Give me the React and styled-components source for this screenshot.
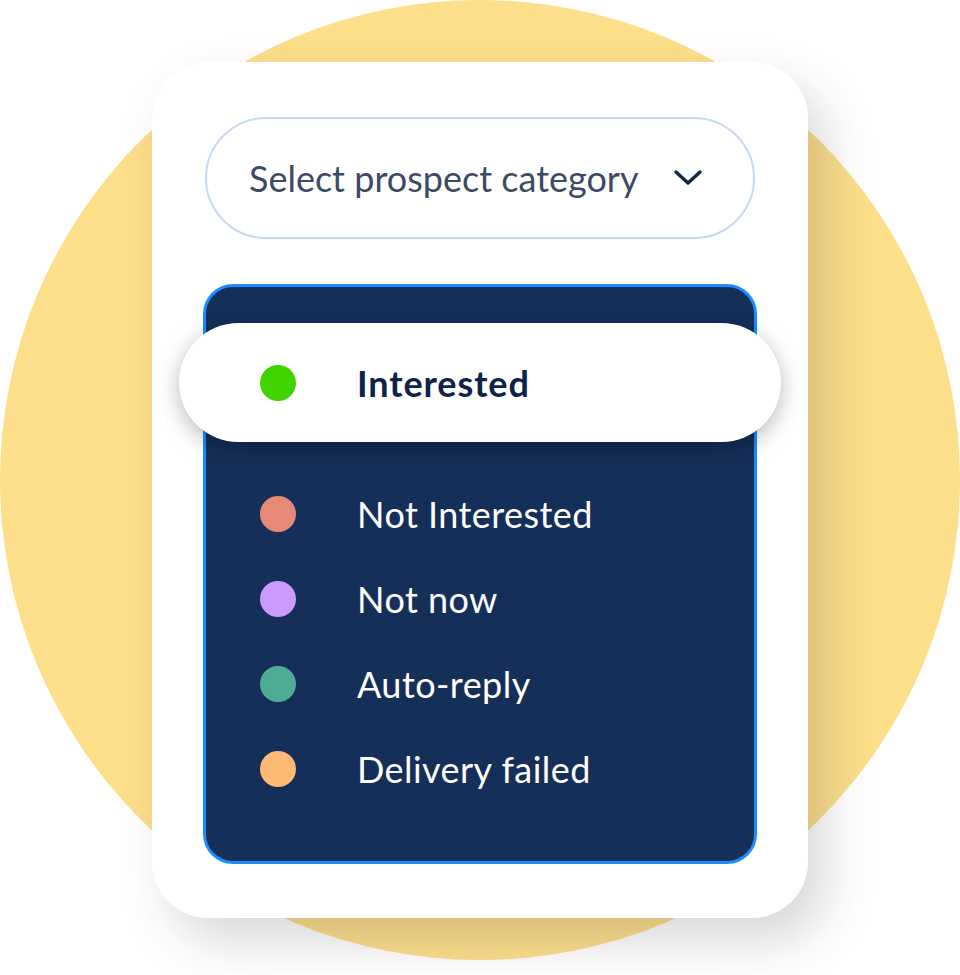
import React from "react";
import styled, { createGlobalStyle } from "styled-components";

const GlobalStyle = createGlobalStyle`
  html, body {
    margin: 0;
    padding: 0;
    background: #ffffff;
  }
  body {
    font-family: "Lato", "Open Sans", sans-serif;
  }
`;

const Stage = styled.div`
  width: 960px;
  height: 975px;
  overflow: hidden;
`;

const Backdrop = styled.div`
  width: 960px;
  height: 960px;
  border-radius: 50%;
  background: #fcde8b;
  display: flex;
  justify-content: center;
  padding-top: 62px;
  box-sizing: border-box;
`;

const Card = styled.div`
  width: 656px;
  height: 856px;
  box-sizing: border-box;
  background: #ffffff;
  border-radius: 56px;
  padding: 55px 51px 54px;
  display: flex;
  flex-direction: column;
  align-items: center;
  gap: 45px;
  box-shadow: 18px 24px 50px rgba(40, 40, 40, 0.18);
`;

const Select = styled.div`
  width: 550px;
  height: 122px;
  box-sizing: border-box;
  border: 2px solid #c6d8f3;
  border-radius: 61px;
  display: flex;
  align-items: center;
  justify-content: space-between;
  padding: 0 50px 0 42px;
`;

const Placeholder = styled.span`
  font-size: 36px;
  color: #3d4a63;
`;

const Panel = styled.div`
  width: 554px;
  flex: 1;
  box-sizing: border-box;
  background: #152f59;
  border: 3px solid #1b8cff;
  border-radius: 30px;
  padding: 36px 0 0;
  display: flex;
  flex-direction: column;
`;

const Active = styled.div`
  margin: 0 -27px 29px;
  height: 119px;
  border-radius: 60px;
  background: #ffffff;
  display: flex;
  align-items: center;
  padding-left: 81px;
  box-shadow: 0 6px 22px rgba(0, 0, 0, 0.28);
`;

const Option = styled.div`
  height: 85px;
  display: flex;
  align-items: center;
  padding-left: 54px;
`;

const Dot = styled.span`
  width: 36px;
  height: 36px;
  border-radius: 50%;
  background: ${(p) => p.color};
  flex-shrink: 0;
  margin-right: 61px;
`;

const Label = styled.span`
  font-size: 36px;
  color: ${(p) => (p.active ? "#0f2348" : "#ffffff")};
  font-weight: ${(p) => (p.active ? 700 : 400)};
  letter-spacing: ${(p) => (p.active ? "0.9px" : "0.45px")};
`;

const options = [
  { label: "Not Interested", color: "#e68a77" },
  { label: "Not now", color: "#cc99ff" },
  { label: "Auto-reply", color: "#4fac94" },
  { label: "Delivery failed", color: "#feba74" },
];

const Chevron = () => (
  <svg width="30" height="18" viewBox="0 0 30 18" fill="none">
    <path
      d="M3 3 L15 14 L27 3"
      stroke="#14254a"
      strokeWidth="3.5"
      strokeLinecap="round"
      strokeLinejoin="round"
    />
  </svg>
);

export default function App() {
  return (
    <Stage>
      <GlobalStyle />
      <Backdrop>
        <Card>
          <Select>
            <Placeholder>Select prospect category</Placeholder>
            <Chevron />
          </Select>
          <Panel>
            <Active>
              <Dot color="#3fd400" />
              <Label active>Interested</Label>
            </Active>
            {options.map((o) => (
              <Option key={o.label}>
                <Dot color={o.color} />
                <Label>{o.label}</Label>
              </Option>
            ))}
          </Panel>
        </Card>
      </Backdrop>
    </Stage>
  );
}
